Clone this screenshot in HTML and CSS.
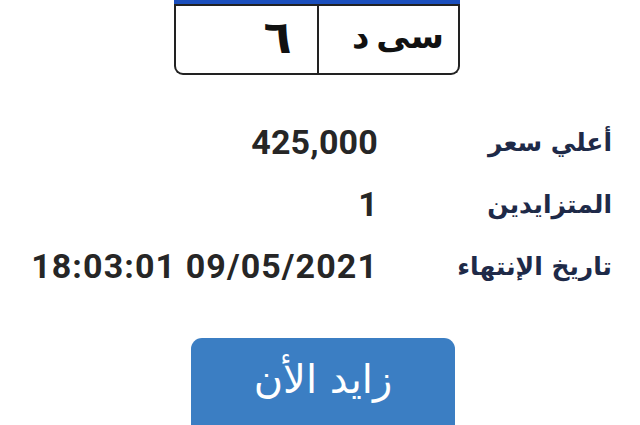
FILE: index.html
```html
<!DOCTYPE html>
<html lang="ar">
<head>
<meta charset="utf-8">
<link rel="stylesheet" href="styles.css">
</head>
<body>
<div class="page">
  <div class="plate">
    <div class="plate-band"></div>
    <div class="plate-cells">
      <div class="cell cell-letters">سى د</div>
      <div class="cell cell-number">٦</div>
    </div>
  </div>
  <div class="info">
    <div class="label">أعلي سعر</div>
    <div class="value">425,000</div>
    <div class="label">المتزايدين</div>
    <div class="value">1</div>
    <div class="label">تاريخ الإنتهاء</div>
    <div class="value value-date">18:03:01 09/05/2021</div>
  </div>
  <div class="btn">زايد الأن</div>
</div>
</body>
</html>
```
FILE: styles.css
```css
html, body {
  margin: 0;
  padding: 0;
  background: #ffffff;
}
.page {
  width: 640px;
  height: 425px;
  overflow: hidden;
}
.plate {
  margin-left: 174px;
  width: 286px;
  height: 75px;
  box-sizing: border-box;
  border: 2px solid #222;
  border-top: none;
  border-radius: 0 0 9px 9px;
  display: flex;
  flex-direction: column;
  background: #fff;
}
.plate-band {
  height: 4px;
  background: #1b4fbd;
  border-bottom: 2px solid #222;
  margin: 0 -2px;
}
.plate-cells {
  flex: 1;
  display: flex;
  direction: rtl;
}
.cell {
  display: flex;
  align-items: center;
  color: #111;
  font-family: "DejaVu Sans", sans-serif;
}
.cell-letters {
  width: 141px;
  border-left: 2px solid #222;
  font-size: 34px;
  font-weight: bold;
  padding-right: 14px;
  padding-bottom: 8px;
  box-sizing: border-box;
  justify-content: flex-start;
  letter-spacing: -1px;
  word-spacing: -5px;
}
.cell-number {
  flex: 1;
  justify-content: center;
  font-size: 46px;
  font-weight: bold;
  padding-bottom: 6px;
  padding-left: 62px;
}
.info {
  margin-top: 36px;
  direction: rtl;
  padding-right: 28px;
  display: grid;
  grid-template-columns: 234px auto;
  grid-auto-rows: 62px;
  align-items: center;
}
.label {
  font-family: "DejaVu Sans", sans-serif;
  font-weight: bold;
  font-size: 25px;
  color: #1e2a48;
  text-align: right;
}
.value {
  direction: ltr;
  text-align: right;
  justify-self: start;
  font-family: Roboto, "Liberation Sans", sans-serif;
  font-weight: bold;
  font-size: 34px;
  color: #262626;
  letter-spacing: 0.2px;
}
.value-date {
  letter-spacing: 1.1px;
}
.btn {
  margin-top: 41px;
  margin-left: 191px;
  width: 264px;
  height: 100px;
  box-sizing: border-box;
  background: #3b7ec3;
  border-radius: 11px;
  color: #fff;
  font-family: "DejaVu Sans", sans-serif;
  font-size: 40px;
  text-align: center;
  padding-top: 18px;
}
```
